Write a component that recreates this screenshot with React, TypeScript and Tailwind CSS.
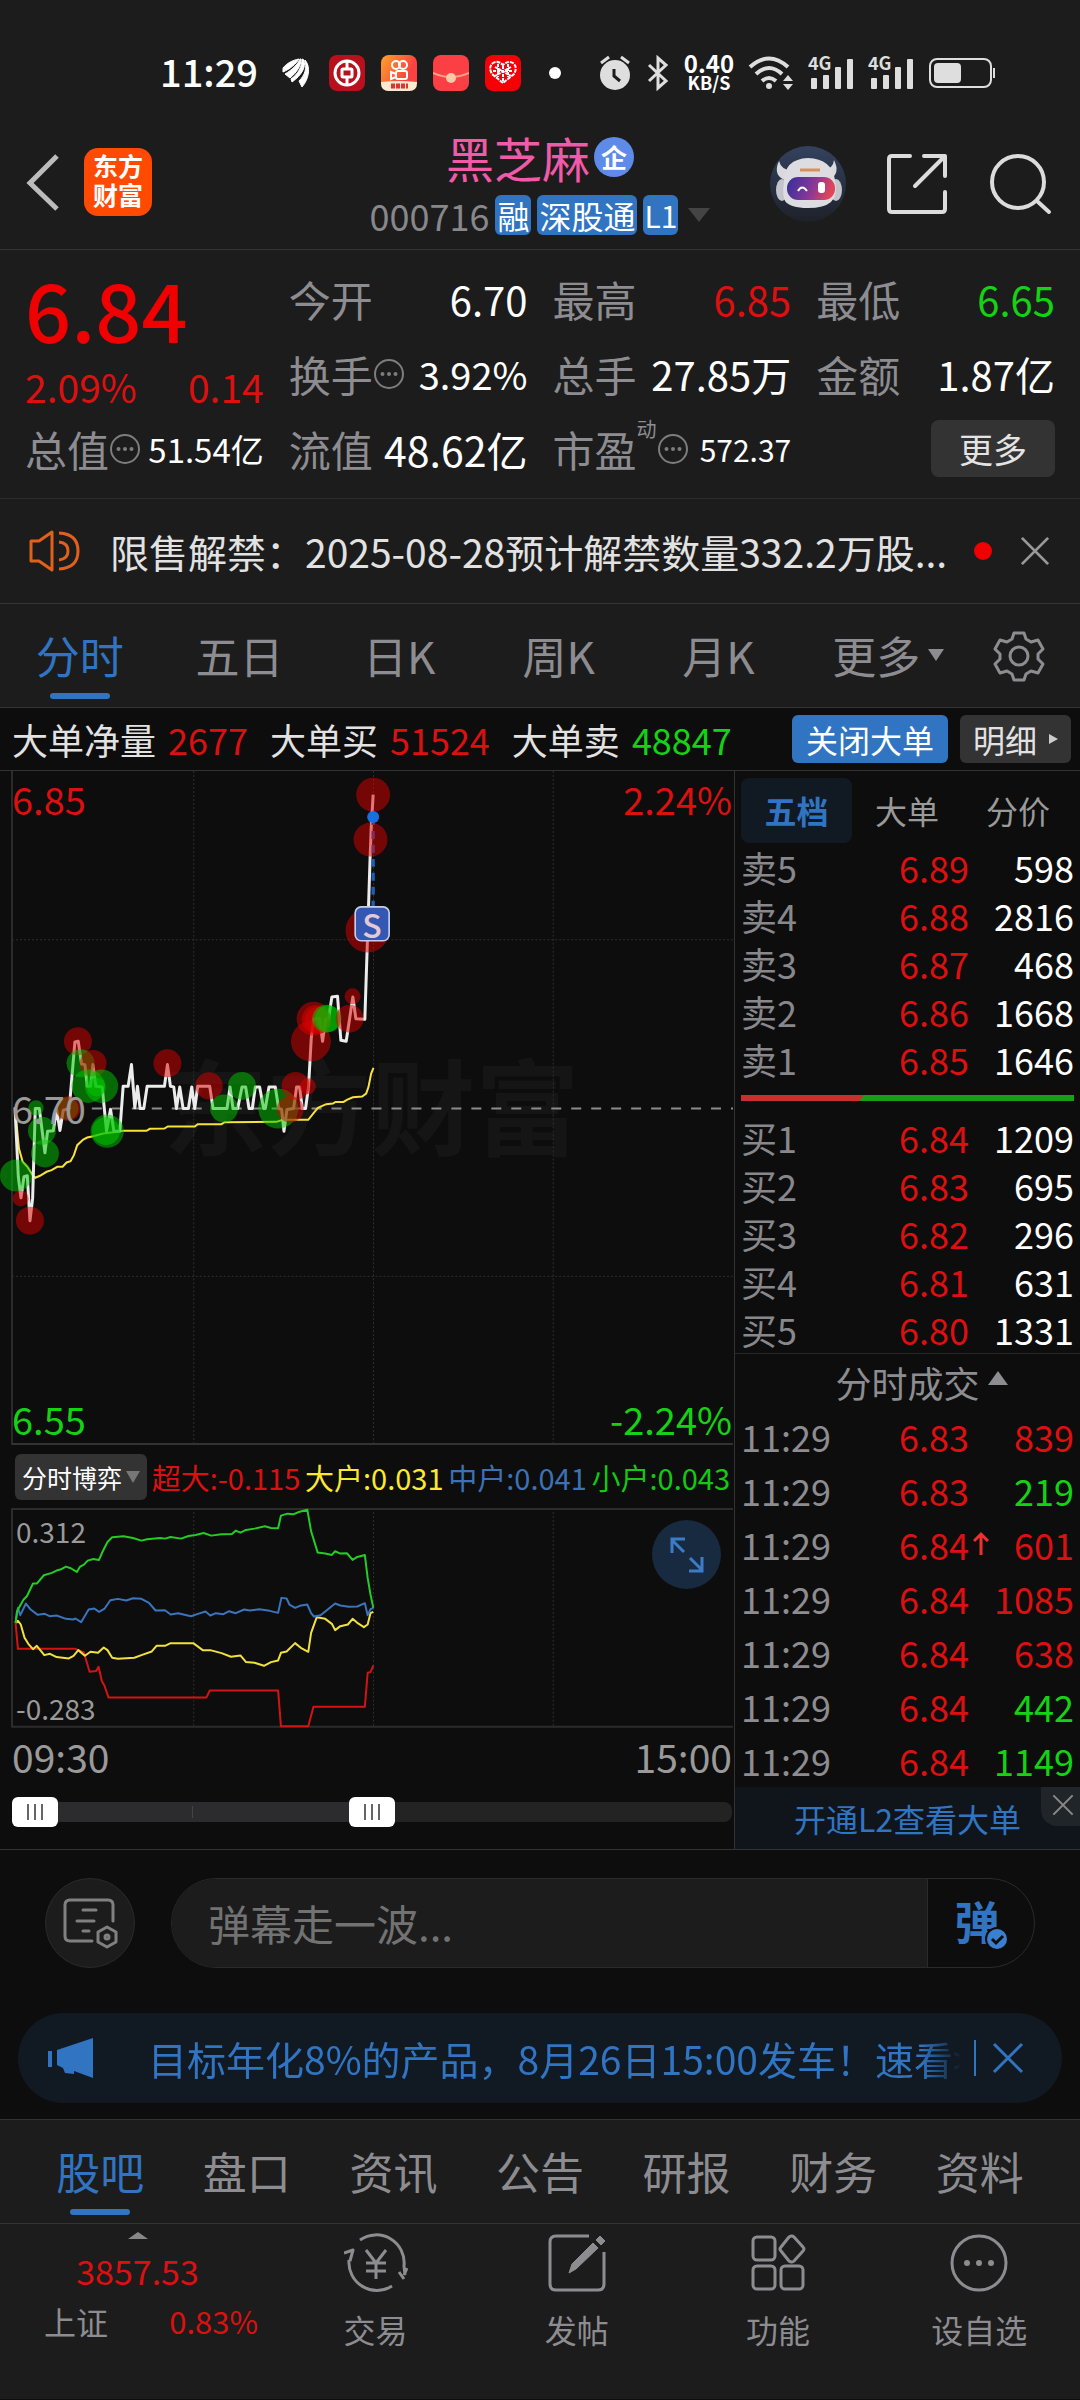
import { useState } from "react";
import type { ReactNode } from "react";

const stats = {
  open: "6.70",
  high: "6.85",
  low: "6.65",
};

const periodTabs = ["分时", "五日", "日K", "周K", "月K"];
const infoTabs = ["股吧", "盘口", "资讯", "公告", "研报", "财务", "资料"];

const asks = [
  ["卖5", "6.89", "598"],
  ["卖4", "6.88", "2816"],
  ["卖3", "6.87", "468"],
  ["卖2", "6.86", "1668"],
  ["卖1", "6.85", "1646"],
];

const bids = [
  ["买1", "6.84", "1209"],
  ["买2", "6.83", "695"],
  ["买3", "6.82", "296"],
  ["买4", "6.81", "631"],
  ["买5", "6.80", "1331"],
];

const trades = [
  { price: "6.83", volume: "839", up: true, arrow: false },
  { price: "6.83", volume: "219", up: false, arrow: false },
  { price: "6.84", volume: "601", up: true, arrow: true },
  { price: "6.84", volume: "1085", up: true, arrow: false },
  { price: "6.84", volume: "638", up: true, arrow: false },
  { price: "6.84", volume: "442", up: false, arrow: false },
  { price: "6.84", volume: "1149", up: false, arrow: false },
];

const priceLine =
  "45,447 55,655 63,718 72,655 82,652 90,787 98,720 106,450 118,450 135,583 143,518 160,517 170,452 180,516 190,455 208,450 225,250 235,248 245,316 255,318 262,383 272,383 279,318 288,383 307,385 320,518 332,452 342,518 360,518 370,383 385,383 395,318 405,448 413,383 421,450 432,450 442,383 494,383 503,318 512,383 522,385 530,450 540,385 550,450 566,450 576,385 585,450 594,383 630,383 640,450 682,450 691,385 700,450 714,450 727,385 738,385 748,450 758,450 767,385 780,385 792,450 797,450 808,385 827,385 837,450 846,453 853,518 862,453 882,450 891,385 900,385 908,450 918,450 927,383 935,240 942,180 960,180 969,248 978,182 987,180 997,115 1014,113 1024,245 1040,248 1050,182 1060,115 1069,180 1096,182 1102,0 1112,-309 1115,-390 1121,-493";

const averageLine =
  "45,447 57,570 68,610 82,625 98,650 106,658 120,652 140,640 155,635 172,625 188,625 200,612 212,608 222,590 232,560 250,543 262,537 280,533 310,525 340,521 370,517 440,517 450,511 494,510 504,504 585,504 594,497 665,497 675,491 830,490 850,484 926,484 945,460 955,448 980,437 1000,435 1008,430 1032,430 1042,424 1060,416 1088,414 1100,405 1107,385 1115,345 1122,328";

const RED = "#dc0000";
const GREEN = "#00c800";

const orders: [number, number, number, string][] = [
  [48, 651, 48, GREEN],
  [62, 720, 24, RED],
  [90, 787, 42, RED],
  [108, 448, 23, GREEN],
  [126, 517, 42, GREEN],
  [135, 585, 42, GREEN],
  [202, 450, 34, GREEN],
  [205, 450, 37, RED],
  [234, 248, 42, RED],
  [242, 314, 42, GREEN],
  [280, 314, 40, RED],
  [265, 383, 50, GREEN],
  [305, 383, 50, GREEN],
  [290, 385, 28, GREEN],
  [322, 518, 50, GREEN],
  [318, 518, 42, GREEN],
  [503, 314, 42, RED],
  [628, 382, 41, RED],
  [673, 450, 42, GREEN],
  [727, 382, 42, GREEN],
  [836, 450, 60, GREEN],
  [872, 452, 40, RED],
  [888, 382, 42, RED],
  [925, 383, 24, RED],
  [934, 248, 60, RED],
  [942, 180, 51, RED],
  [948, 182, 42, RED],
  [955, 185, 40, RED],
  [980, 180, 42, GREEN],
  [986, 180, 40, GREEN],
  [1050, 180, 42, RED],
  [1059, 113, 24, RED],
  [1121, -493, 51, RED],
  [1113, -358, 51, RED],
  [1104, -85, 66, RED],
];

const smallLine =
  "33,735 36,700 50,665 57,655 70,617 78,617 93,592 110,585 120,578 128,575 140,566 150,571 163,582 170,566 178,560 186,548 198,543 210,546 218,520 228,492 238,478 262,475 282,480 300,488 312,484 340,480 350,482 362,477 384,482 400,474 415,471 432,465 448,473 470,469 492,468 500,458 510,464 522,456 540,452 562,445 575,450 590,451 596,413 610,407 622,409 634,402 652,395 660,460 674,524 690,527 704,531 711,520 722,527 736,526 748,546 758,537 774,531 780,600 786,650 792,690";
const midLine =
  "33,735 38,690 43,712 55,677 65,695 80,711 95,708 105,715 120,713 140,723 155,725 160,722 172,733 188,695 200,692 210,702 222,692 234,667 250,663 268,668 282,661 300,663 316,675 330,698 350,697 362,710 378,706 405,715 420,708 436,701 446,713 458,706 474,709 486,700 500,706 518,695 530,698 550,694 572,699 590,705 597,660 608,662 614,680 626,690 636,684 652,680 660,706 666,716 680,712 711,677 722,683 740,687 758,686 774,676 780,712 786,694 792,690";
const bigLine =
  "33,735 38,729 44,740 52,780 60,798 70,814 78,804 94,832 106,828 120,838 146,842 156,834 166,817 180,834 192,822 208,825 220,809 228,817 238,840 250,843 285,840 300,832 322,821 332,804 350,804 362,796 410,796 430,817 446,817 470,826 490,837 510,833 522,853 540,855 560,864 575,853 590,848 596,825 608,821 626,796 640,812 654,822 660,765 672,718 690,723 704,738 711,757 722,745 738,740 748,723 758,735 772,748 780,740 786,706 792,702";
const superLine =
  "33,735 38,813 160,813 178,824 190,882 204,880 209,867 216,910 222,925 230,959 438,959 445,938 590,938 596,1046 654,1046 665,987 774,987 780,885 786,883 792,863";

function Info() {
  return (
    <svg viewBox="0 0 32 32" className="h-8 w-8 shrink-0 text-[#7d7d80]" fill="none" stroke="currentColor" strokeWidth="2">
      <circle cx="16" cy="16" r="14" />
      <g fill="currentColor" stroke="none">
        <circle cx="9.5" cy="16" r="2" />
        <circle cx="16" cy="16" r="2" />
        <circle cx="22.5" cy="16" r="2" />
      </g>
    </svg>
  );
}

function Cross({ className }: { className: string }) {
  return (
    <svg viewBox="0 0 32 32" className={className} fill="none" stroke="currentColor" strokeWidth="3">
      <path d="M2 2 30 30M30 2 2 30" />
    </svg>
  );
}

function Signal() {
  return (
    <span className="relative h-9 w-[46px]">
      <span className="absolute left-0 top-0 text-[18px] font-bold leading-[14px] text-[#ddd]">4G</span>
      <svg viewBox="0 0 46 36" className="h-9 w-[46px]" fill="#dedede">
        <rect x="3" y="23" width="6" height="11" rx="1" />
        <rect x="15" y="20" width="6" height="14" rx="1" />
        <rect x="27" y="12" width="6" height="22" rx="1" />
        <rect x="39" y="4" width="6" height="30" rx="1" />
      </svg>
    </span>
  );
}

function StatusBar() {
  return (
    <div className="flex h-[146px] items-center pl-40 pr-[84px]">
      <span className="w-[121px] pb-1 text-[38px] font-medium leading-10 text-white">11:29</span>
      <div className="flex items-center gap-4">
        <svg viewBox="0 0 32 36" className="h-9 w-8" fill="#fff">
          <path d="M2 13C6 8 12 5 18 4 15 9 9 14 2 17ZM4 19C11 15 17 9 19 4L20 4C20 11 16 17 9 23ZM10 24C17 19 21 12 21 4L23 5C25 12 21 20 11 27ZM18 26C24 20 26 13 24 5 30 12 28 24 21 32Z" stroke="#fff" strokeWidth="1" />
        </svg>
        <svg viewBox="0 0 36 36" className="h-9 w-9" fill="none" stroke="#fff">
          <rect width="36" height="36" rx="8" fill="#b8101c" stroke="none" />
          <circle cx="18" cy="18" r="12" strokeWidth="3" />
          <rect x="13" y="14" width="10" height="8" rx="1" strokeWidth="3" />
          <path d="M18 6V14M18 22V30" strokeWidth="3" />
        </svg>
        <svg viewBox="0 0 36 36" className="h-9 w-9" fill="none" stroke="#fff" strokeWidth="2">
          <defs>
            <linearGradient id="clip" x1="0" y1="0" x2="1" y2="0.6">
              <stop offset="0" stopColor="#fba52a" />
              <stop offset="0.8" stopColor="#fd4040" />
            </linearGradient>
          </defs>
          <rect width="36" height="36" rx="8" fill="url(#clip)" stroke="none" />
          <circle cx="15" cy="10" r="4" />
          <circle cx="22" cy="10" r="4" />
          <rect x="15" y="16" width="11" height="8" rx="2" />
          <path d="M15 19 10 17V24L15 22" />
          <path d="M0 27Q18 25 36 27V28Q36 36 28 36H8Q0 36 0 28Z" fill="#fbe9d0" stroke="none" />
          <path d="M10 31H27" stroke="#d33" strokeWidth="5" strokeDasharray="4 1" />
        </svg>
        <svg viewBox="0 0 36 36" className="h-9 w-9" fill="none">
          <rect width="36" height="36" rx="8" fill="#fb3f45" />
          <path d="M0 18Q18 26 36 18" stroke="#f9a08c" strokeWidth="2" />
          <circle cx="18" cy="23" r="5" fill="#f8c9a6" />
        </svg>
        <svg viewBox="0 0 36 36" className="h-9 w-9">
          <rect width="36" height="36" rx="8" fill="#f60008" />
          <path d="M18 28 7 19Q3 12 8 8 13 5 18 10 23 5 28 8 33 12 29 19Z" fill="none" stroke="#fff" strokeWidth="2" strokeDasharray="4 1" />
          <path d="M10 12 26 21M26 12 10 21M18 11V26M13 9V22M23 9V22M8 16H28" stroke="#fff" strokeWidth="2" strokeDasharray="3 1" />
        </svg>
      </div>
      <span className="ml-7 h-3 w-3 rounded-full bg-white" />
      <div className="ml-auto flex items-center gap-[14px]">
        <svg viewBox="0 0 34 36" className="h-9 w-[34px]" fill="#dedede">
          <circle cx="17" cy="20" r="15" />
          <path d="M3 8 11 2M31 8 23 2" stroke="#dedede" strokeWidth="3" />
          <path d="M16 14V21L22 26" fill="none" stroke="#1c1c1c" strokeWidth="3" />
        </svg>
        <svg viewBox="0 0 24 36" className="h-9 w-6" fill="none" stroke="#dedede" strokeWidth="3">
          <path d="M3 10 20 26 12 33V3L20 10 3 26" />
        </svg>
        <span className="flex w-[50px] flex-col items-center pb-1 font-bold text-white">
          <span className="text-[24px] leading-[22px]">0.40</span>
          <span className="text-[18px] leading-4">KB/S</span>
        </span>
        <svg viewBox="0 0 46 36" className="h-9 w-[46px]" fill="none" stroke="#dedede" strokeWidth="4">
          <path d="M2 12Q21-5 40 12M8 19Q21 7 34 19M14 26Q21 20 28 26" />
          <circle cx="21" cy="31" r="3" fill="#dedede" stroke="none" />
          <path d="M35 26 40 20 45 26ZM35 29H45L40 35Z" fill="#dedede" stroke="none" />
        </svg>
        <Signal />
        <Signal />
        <svg viewBox="0 0 68 36" className="h-9 w-[68px]" fill="none">
          <rect x="2" y="4" width="61" height="28" rx="7" stroke="#dedede" strokeWidth="2" />
          <rect x="6" y="8" width="27" height="20" rx="4" fill="#dedede" />
          <path d="M66 13V23" stroke="#dedede" strokeWidth="2" />
        </svg>
      </div>
    </div>
  );
}

function Robot() {
  return (
    <svg viewBox="0 0 76 76" className="h-[76px] w-[76px]">
      <defs>
        <linearGradient id="disc" x1="0" y1="0" x2="0" y2="1">
          <stop offset="0" stopColor="#34425f" />
          <stop offset="1" stopColor="#1d2129" />
        </linearGradient>
        <linearGradient id="visor" x1="0" y1="0" x2="1" y2="0.2">
          <stop offset="0" stopColor="#30309c" />
          <stop offset="0.6" stopColor="#8a3796" />
          <stop offset="1" stopColor="#e0455a" />
        </linearGradient>
      </defs>
      <circle cx="38" cy="38" r="38" fill="url(#disc)" />
      <path d="M9 15Q2 30 17 35L23 25Q11 24 9 15ZM64 14Q71 28 59 34L52 23Q63 24 64 14Z" fill="#d9d9de" />
      <ellipse cx="12" cy="44" rx="6" ry="11" fill="#c3c3cc" />
      <ellipse cx="66" cy="44" rx="6" ry="11" fill="#c3c3cc" />
      <path d="M14 36Q14 13 38 12 62 13 65 34 68 50 61 56 54 62 38 62 20 62 15 55 12 48 14 36Z" fill="#dddde1" />
      <rect x="17" y="31" width="48" height="23" rx="11" fill="url(#visor)" />
      <path d="M30 24H50" stroke="#d6905a" strokeWidth="3" />
      <path d="M28 45Q32 38 37 45" fill="none" stroke="#fff" strokeWidth="2" />
      <rect x="48" y="36" width="7" height="11" rx="3" fill="#fff" />
    </svg>
  );
}

function Header() {
  return (
    <header className="flex h-[104px] items-start border-b border-[#333] pl-6 pr-7">
      <div className="flex flex-1 items-center gap-5">
        <button aria-label="返回" className="flex h-[72px] w-10 items-center">
          <svg viewBox="0 0 40 60" className="h-[60px] w-10" fill="none" stroke="#bcbcbc" strokeWidth="5">
            <path d="M33 4 6 31 33 57" />
          </svg>
        </button>
        <span className="flex h-[68px] w-[68px] flex-col items-center justify-center rounded-[14px] bg-[#ff4a04] pb-1 text-[25px] font-bold leading-[29px] text-white">
          <span>东方</span>
          <span>财富</span>
        </span>
      </div>
      <div className="ml-1 flex flex-col items-center">
        <h1 className="-mt-4 flex items-center gap-1 text-[48px] leading-[54px] text-[#f05aa8]">
          黑芝麻
          <span className="flex h-10 w-10 items-center justify-center rounded-full bg-[#5f8be8] text-[26px] font-bold leading-8 text-white">企</span>
        </h1>
        <button className="mt-[11px] flex items-center gap-[6px] text-[36px] leading-10 text-[#88888c]">
          000716
          <span className="rounded-[6px] bg-[#3074c2] px-[2px] text-[32px] text-white">融</span>
          <span className="rounded-[6px] bg-[#3074c2] px-[2px] text-[32px] text-white">深股通</span>
          <span className="rounded-[6px] bg-[#3074c2] px-[1px] text-[30px] text-white">L1</span>
          <svg viewBox="0 0 22 16" className="ml-1 h-4 w-[22px]" fill="#444">
            <path d="M0 1H22L11 15Z" />
          </svg>
        </button>
      </div>
      <div className="flex flex-1 items-center justify-end gap-10">
        <button aria-label="智能助手">
          <Robot />
        </button>
        <button aria-label="分享">
          <svg viewBox="0 0 62 62" className="h-[62px] w-[62px]" fill="none" stroke="#dcdcdc" strokeWidth="4" strokeLinecap="round">
            <path d="M24 3H6Q3 3 3 6V56Q3 59 6 59H56Q59 59 59 56V39M38 3H59V23M59 3 29 33" strokeLinejoin="round" />
          </svg>
        </button>
        <button aria-label="搜索">
          <svg viewBox="0 0 64 64" className="h-16 w-16" fill="none" stroke="#dcdcdc" strokeWidth="4" strokeLinecap="round">
            <circle cx="30" cy="30" r="26" />
            <path d="M49 49 61 60" />
          </svg>
        </button>
      </div>
    </header>
  );
}

function Stat({ label, value, tone }: { label: ReactNode; value: string; tone: string }) {
  return (
    <div className="flex items-center justify-between whitespace-nowrap">
      <span className="flex items-center text-[42px] text-[#8d8d91]">{label}</span>
      <span className={tone}>{value}</span>
    </div>
  );
}

function Quote() {
  const white = "text-[40px] text-white";
  return (
    <section className="grid auto-rows-[75px] grid-cols-4 gap-x-[25px] border-b border-[#2c2c2c] px-[25px] pb-3 pt-[11px] leading-[50px]">
      <div className="row-span-2 flex flex-col justify-between text-[39px] text-[#dc1010]">
        <strong className="text-[81px] font-medium leading-[94px] text-[#f00000]">6.84</strong>
        <div className="flex justify-between">
          <span>2.09%</span>
          <span>0.14</span>
        </div>
      </div>
      <Stat label="今开" value={stats.open} tone={white} />
      <Stat label="最高" value={stats.high} tone="text-[40px] text-[#dc1010]" />
      <Stat label="最低" value={stats.low} tone="text-[40px] text-[#14d214]" />
      <Stat label={<>换手<Info /></>} value="3.92%" tone="text-[38px] text-white" />
      <Stat label="总手" value="27.85万" tone={white} />
      <Stat label="金额" value="1.87亿" tone={white} />
      <Stat label={<>总值<Info /></>} value="51.54亿" tone="text-[33px] text-white" />
      <Stat label="流值" value="48.62亿" tone="text-[41px] text-white" />
      <Stat
        label={
          <>
            市盈<sup className="-top-5 text-[20px] leading-5">动</sup>
            <Info />
          </>
        }
        value="572.37"
        tone="text-[30px] text-white"
      />
      <button className="h-[57px] w-[124px] self-center justify-self-end rounded-lg bg-[#333] text-[34px] text-[#e4e4e4]">更多</button>
    </section>
  );
}

function Notice() {
  return (
    <section className="flex h-[105px] items-center border-b border-[#333] px-7">
      <svg viewBox="0 0 54 44" className="h-11 w-[54px] shrink-0" fill="none" stroke="#e0601c" strokeWidth="3" strokeLinejoin="round">
        <path d="M3 12H11L24 3V41L11 32H3ZM31 4Q50 5 50 22T31 40M31 13Q40 14 40 22T31 31" />
      </svg>
      <a href="#notice" className="ml-7 flex-1 truncate text-[39px] leading-[58px] text-[#e2e2e2]">
        限售解禁：2025-08-28预计解禁数量332.2万股...
      </a>
      <span className="h-[18px] w-[18px] shrink-0 rounded-full bg-[#f00000]" />
      <button aria-label="关闭公告" className="ml-7 mr-[2px]">
        <Cross className="h-[30px] w-[30px] text-[#999]" />
      </button>
    </section>
  );
}

function PeriodTabs({ active, onPick }: { active: string; onPick: (t: string) => void }) {
  return (
    <nav className="flex h-[104px] items-center border-b border-[#333] text-[44px] leading-[56px] text-[#8d8d91]">
      <div className="grid h-full flex-1 grid-cols-6">
        {periodTabs.map((t) => (
          <button key={t} onClick={() => onPick(t)} className={t === active ? "relative pb-[2px] text-[#3074c2]" : "pb-[2px]"}>
            {t}
            {t === active && <span className="absolute bottom-2 left-1/2 h-[6px] w-[60px] -translate-x-1/2 rounded-full bg-[#3074c2]" />}
          </button>
        ))}
        <button className="flex items-center justify-center gap-2 pb-[2px] pl-5">
          更多
          <svg viewBox="0 0 16 12" className="h-3 w-4" fill="currentColor">
            <path d="M0 0H16L8 12Z" />
          </svg>
        </button>
      </div>
      <button aria-label="设置" className="flex w-[122px] justify-center">
        <svg viewBox="0 0 54 54" className="h-[54px] w-[54px]" fill="none" stroke="currentColor" strokeWidth="3" strokeLinejoin="round">
          <path d="M22 4H32L34 10 39 13 46 11 51 20 46 25V30L51 35 46 44 39 42 34 45 32 51H22L20 45 15 42 8 44 3 35 8 30V25L3 20 8 11 15 13 20 10Z" />
          <circle cx="27" cy="27" r="9" />
        </svg>
      </button>
    </nav>
  );
}

function BigOrders() {
  return (
    <div className="flex h-[63px] items-center border-b border-[#333] pl-3 pr-[9px] text-[36px] leading-10 text-[#e2e2e2]">
      <span>大单净量</span>
      <span className="ml-3 text-[#dc1010]">2677</span>
      <span className="ml-[22px]">大单买</span>
      <span className="ml-3 text-[#dc1010]">51524</span>
      <span className="ml-[22px]">大单卖</span>
      <span className="ml-3 text-[#14d214]">48847</span>
      <button className="ml-auto h-12 w-[156px] rounded-md bg-[#3074c2] text-[32px] text-white">关闭大单</button>
      <button className="ml-3 flex h-12 w-[111px] items-center justify-center gap-3 rounded-md bg-[#333] text-[32px]">
        明细
        <svg viewBox="0 0 9 10" className="h-[10px] w-[9px]" fill="#ccc">
          <path d="M0 0 9 5 0 10Z" />
        </svg>
      </button>
    </div>
  );
}

function PriceChart() {
  return (
    <div className="relative text-[38px] leading-[44px]">
      <span className="absolute left-1/2 top-1/2 -translate-x-[49%] -translate-y-[54%] whitespace-nowrap text-[104px] font-bold leading-[120px] text-[#151515]">
        东方财富
      </span>
      <svg viewBox="0 0 735 675" className="relative block w-full" fill="none">
        <path d="M194 0V675M374 0V675M554 0V675M12 169H734M12 506H734" stroke="#303030" strokeDasharray="2 2" />
        <path d="M12 0V675" stroke="#2c2c2c" strokeWidth="2" />
        <path d="M12 674H734" stroke="#333" strokeWidth="2" />
        <path d="M92 338H734" stroke="#8c8c8c" strokeWidth="2" strokeDasharray="10 10" />
        <g transform="translate(0 188) scale(0.33333)">
          <polyline points={averageLine} stroke="#f7e23c" strokeWidth="6" />
          <polyline points={priceLine} stroke="#ececec" strokeWidth="9" strokeLinejoin="round" />
          <path d="M1121-426V-158" stroke="#1c5fb4" strokeWidth="10" strokeDasharray="24 18" />
          {orders.map(([x, y, r, color]) => (
            <circle key={`${x}-${y}`} cx={x} cy={y} r={r} fill={color} fillOpacity="0.5" />
          ))}
          <circle cx="1121" cy="-426" r="18" fill="#1a6fe0" />
          <rect x="1067" y="-156" width="102" height="102" rx="18" fill="#3457b4" stroke="#c8cdec" strokeWidth="5" />
        </g>
      </svg>
      <span className="absolute left-[332px] top-[135px] w-20 text-center text-[32px] font-medium leading-9 text-[#e4c8d4]">S</span>
      <span className="absolute left-3 top-[6px] text-[#dc1010]">6.85</span>
      <span className="absolute right-[2px] top-[6px] text-[#dc1010]">2.24%</span>
      <span className="absolute left-3 top-1/2 -translate-y-1/2 text-[#9a9a9a]">6.70</span>
      <span className="absolute bottom-1 left-3 text-[#14d214]">6.55</span>
      <span className="absolute bottom-1 right-[2px] text-[#14d214]">-2.24%</span>
    </div>
  );
}

function FlowChart() {
  return (
    <>
      <div className="flex h-[63px] items-center justify-between pl-[15px] pr-1 text-[29px] leading-9">
        <button className="flex h-[46px] w-[132px] items-center justify-center gap-1 rounded-md bg-[#333] text-[25px] text-white">
          分时博弈
          <svg viewBox="0 0 14 12" className="h-3 w-[14px]" fill="#777">
            <path d="M0 0H14L7 12Z" />
          </svg>
        </button>
        <span className="text-[#dc1010]">超大:-0.115</span>
        <span className="text-[#fbe930]">大户:0.031</span>
        <span className="text-[#3c72b4]">中户:0.041</span>
        <span className="text-[#14c814]">小户:0.043</span>
      </div>
      <div className="relative text-[28px] leading-8 text-[#9a9a9a]">
        <svg viewBox="0 0 735 220" className="block w-full" fill="none">
          <path d="M194 0V219M374 0V219M554 0V219" stroke="#303030" strokeDasharray="2 2" />
          <path d="M734 1H12V219H734" stroke="#2c2c2c" strokeWidth="2" />
          <g transform="translate(0 -130) scale(0.472 0.33333)" strokeLinejoin="round" strokeWidth="2">
            <polyline vectorEffect="non-scaling-stroke" points={superLine} stroke="#d41414" />
            <polyline vectorEffect="non-scaling-stroke" points={bigLine} stroke="#f0e040" />
            <polyline vectorEffect="non-scaling-stroke" points={midLine} stroke="#3a74bd" />
            <polyline vectorEffect="non-scaling-stroke" points={smallLine} stroke="#24cc24" />
          </g>
        </svg>
        <span className="absolute left-4 top-[7px]">0.312</span>
        <span className="absolute bottom-1 left-4">-0.283</span>
        <button aria-label="全屏" className="absolute right-[13px] top-3 flex h-[69px] w-[69px] items-center justify-center rounded-full bg-[#182a40]">
          <svg viewBox="0 0 36 36" className="h-9 w-9" fill="none" stroke="#3a7cc8" strokeWidth="3">
            <path d="M16 2H3V16M3 3 15 15M20 34H33V20M33 33 21 21" />
          </svg>
        </button>
      </div>
    </>
  );
}

const thumb =
  "pointer-events-none absolute inset-0 m-0 h-[30px] w-full appearance-none bg-transparent [&::-webkit-slider-thumb]:pointer-events-auto [&::-webkit-slider-thumb]:h-[30px] [&::-webkit-slider-thumb]:w-[46px] [&::-webkit-slider-thumb]:appearance-none [&::-webkit-slider-thumb]:rounded-md [&::-webkit-slider-thumb]:[background:linear-gradient(90deg,#666_2px,transparent_2px_7px,#666_7px_9px,transparent_9px_14px,#666_14px)_center/16px_16px_no-repeat_#fff]";

function TimeRange() {
  const [from, setFrom] = useState(0);
  const [to, setTo] = useState(50);
  return (
    <>
      <div className="flex justify-between pl-3 pr-[2px] pt-1 text-[39px] leading-[48px] text-[#9a9a9a]">
        <span>09:30</span>
        <span>15:00</span>
      </div>
      <div className="relative mb-[22px] ml-3 mr-[2px] mt-[17px] h-[30px]">
        <div className="absolute inset-x-0 top-[5px] h-5 overflow-hidden rounded-lg bg-[#232323]">
          <div className="h-full bg-[#2c2c2e]" style={{ width: `${to}%` }} />
        </div>
        <span className="absolute left-1/4 top-[9px] h-3 w-px bg-[#444]" />
        <input type="range" aria-label="开始时间" className={thumb} value={from} onChange={(e) => setFrom(Number(e.target.value))} />
        <input type="range" aria-label="结束时间" className={thumb} value={to} onChange={(e) => setTo(Number(e.target.value))} />
      </div>
    </>
  );
}

function Depth({ rows }: { rows: string[][] }) {
  return (
    <table className="w-full text-[36px] leading-10">
      <tbody>
        {rows.map(([label, price, volume]) => (
          <tr key={label} className="h-12">
            <th scope="row" className="w-20 p-0 text-left font-normal text-[#88888c]">{label}</th>
            <td className="p-0 text-right text-[#dc1010]">{price}</td>
            <td className="w-[105px] p-0 text-right text-white">{volume}</td>
          </tr>
        ))}
      </tbody>
    </table>
  );
}

function OrderBook() {
  return (
    <aside className="flex w-[346px] shrink-0 flex-col border-l border-[#333]">
      <div className="flex h-[72px] items-end justify-between pl-[6px] pr-[30px] text-[32px] leading-[65px] text-[#9a9a9a]">
        <button className="h-[65px] w-[111px] rounded-lg bg-[#111a23] font-bold text-[#3074c2]">五档</button>
        <button>大单</button>
        <button className="ml-6">分价</button>
      </div>
      <div className="pl-[6px] pr-[6px]">
        <Depth rows={asks} />
        <div className="mb-3 mt-3 flex h-[6px] bg-[#16a016]">
          <span className="w-[37%] bg-[#c63030] [clip-path:polygon(0_0,100%_0,96%_100%,0_100%)]" />
        </div>
        <Depth rows={bids} />
      </div>
      <button className="flex h-[56px] items-center justify-center gap-2 border-t border-[#282828] pl-7 text-[36px] leading-10 text-[#8d8d91]">
        分时成交
        <svg viewBox="0 0 20 14" className="mb-2 h-[14px] w-5" fill="currentColor">
          <path d="M10 0 20 14H0Z" />
        </svg>
      </button>
      <div className="pl-[6px] pr-[6px]">
        <table className="w-full text-[36px] leading-10">
          <tbody>
            {trades.map((t, i) => (
              <tr key={i} className="h-[54px]">
                <td className="w-20 p-0 text-[#8d8d91]">11:29</td>
                <td className="relative p-0 text-right text-[#dc1010]">
                  {t.price}
                  {t.arrow && (
                    <svg viewBox="0 0 16 24" className="absolute -right-5 top-[14px] h-6 w-4" fill="none" stroke="#f03030" strokeWidth="3">
                      <path d="M8 24V3M1 10 8 3 15 10" />
                    </svg>
                  )}
                </td>
                <td className={t.up ? "w-[105px] p-0 text-right text-[#dc1010]" : "w-[105px] p-0 text-right text-[#14d214]"}>{t.volume}</td>
              </tr>
            ))}
          </tbody>
        </table>
      </div>
      <div className="relative flex flex-1 items-center justify-center bg-[#10151b]">
        <a href="#l2" className="text-[32px] leading-10 text-[#3074c2]">开通L2查看大单</a>
        <button aria-label="关闭推广" className="absolute right-0 top-0 flex h-[39px] w-[39px] items-center justify-center rounded-bl-2xl bg-[#20252a] pb-1 pl-1">
          <Cross className="h-[22px] w-[22px] text-[#888]" />
        </button>
      </div>
    </aside>
  );
}

function Danmu() {
  return (
    <div className="flex items-center gap-9 px-[45px] pb-[45px] pt-7">
      <button aria-label="弹幕设置" className="flex h-[90px] w-[90px] shrink-0 items-center justify-center rounded-full border border-[#2a2a2a] bg-[#1c1c1c]">
        <svg viewBox="0 0 56 52" className="h-[52px] w-14" fill="none" stroke="#808080" strokeWidth="3" strokeLinecap="round">
          <path d="M30 44H8Q3 44 3 39V8Q3 3 8 3H46Q51 3 51 8V24M21 13H34M15 24H32M21 34H27" />
          <path d="M45 30 54 35V45L45 50 36 45V35Z" strokeLinejoin="round" />
          <circle cx="45" cy="40" r="2" />
        </svg>
      </button>
      <form className="flex h-[90px] flex-1 overflow-hidden rounded-full border border-[#2a2a2a]" onSubmit={(e) => e.preventDefault()}>
        <input
          aria-label="弹幕"
          placeholder="弹幕走一波..."
          className="min-w-0 flex-1 border-r border-[#2a2a2a] bg-[#1c1c1c] pl-9 text-[42px] leading-[56px] text-white outline-none placeholder:text-[#727272]"
        />
        <button aria-label="弹幕开关" className="relative flex w-[106px] items-center justify-center text-[45px] font-bold leading-[50px] text-[#3074c2]">
          <span className="mb-1 mr-2">弹</span>
          <svg viewBox="0 0 24 24" className="absolute bottom-4 right-[25px] h-6 w-6">
            <circle cx="12" cy="12" r="12" fill="#0d0d0d" />
            <circle cx="12" cy="12" r="10" fill="#3a80d0" />
            <path d="M7 12 11 16 18 9" fill="none" stroke="#0d0d0d" strokeWidth="3" />
          </svg>
        </button>
      </form>
    </div>
  );
}

function Promo() {
  return (
    <div className="mx-[18px] mb-4 flex h-[90px] items-center rounded-full bg-[#111a23] pl-[30px] pr-[38px] text-[#3074c2]">
      <svg viewBox="0 0 46 42" className="h-[42px] w-[46px] shrink-0" fill="currentColor">
        <path d="M0 14H4V30H0ZM9 13 45 1V41L26 34V37L17 36 15 31 9 28Z" />
      </svg>
      <a
        href="#promo"
        className="ml-[54px] w-0 flex-1 overflow-hidden whitespace-nowrap text-[39px] leading-[58px] [mask-image:linear-gradient(90deg,#000_95%,transparent)]"
      >
        目标年化8%的产品，8月26日15:00发车！速看&gt;&gt;
      </a>
      <span className="ml-3 h-9 w-[2px] bg-[#3074c2]" />
      <button aria-label="关闭推荐" className="ml-4">
        <Cross className="h-8 w-8" />
      </button>
    </div>
  );
}

function InfoTabs() {
  const [active, setActive] = useState("股吧");
  return (
    <nav className="grid h-[105px] grid-cols-7 border-y border-[#333] bg-[#1c1c1c] px-[27px] text-[44px] leading-[56px] text-[#8d8d91]">
      {infoTabs.map((t) => (
        <button key={t} onClick={() => setActive(t)} className={t === active ? "relative text-[#3074c2]" : ""}>
          {t}
          {t === active && <span className="absolute bottom-2 left-1/2 h-[6px] w-[60px] -translate-x-1/2 rounded-full bg-[#3074c2]" />}
        </button>
      ))}
    </nav>
  );
}

function NavItem({ label, children }: { label: string; children: ReactNode }) {
  return (
    <button className="flex flex-1 flex-col items-center gap-4 pt-[9px] text-[32px] leading-10 text-[#8d8d91]">
      <svg viewBox="0 0 64 60" className="h-[60px] w-16" fill="none" stroke="currentColor" strokeWidth="3" strokeLinejoin="round">
        {children}
      </svg>
      <span>{label}</span>
    </button>
  );
}

function BottomNav() {
  return (
    <footer className="flex h-[175px] bg-[#1c1c1c]">
      <button className="flex w-[275px] flex-col items-center pt-2 text-[#dc1010]">
        <svg viewBox="0 0 20 7" className="h-[7px] w-5" fill="#888">
          <path d="M10 0 20 7H0Z" />
        </svg>
        <span className="mt-3 text-[34px] leading-10">3857.53</span>
        <span className="flex w-full items-center justify-between pl-11 pr-[17px] pt-[10px] leading-10">
          <span className="text-[32px] text-[#8d8d91]">上证</span>
          <span className="text-[31px]">0.83%</span>
        </span>
      </button>
      <NavItem label="交易">
        <path d="M16 7A28 28 0 0 1 60 33L61 42M60 46 55 39M60 42 63 35M48 53A28 28 0 0 1 5 27M0 20 9 17 6 28" />
        <path d="M22 17 32 30 42 17M22 30H42M22 38H42M32 30V46" />
      </NavItem>
      <NavItem label="发帖">
        <path d="M44 3H11Q5 3 5 9V51Q5 57 11 57H53Q59 57 59 51V19" />
        <path d="M24 40 27 31 48 10 53 15 31 36Z" fill="currentColor" strokeWidth="1" />
        <path d="M51 7 55 3 60 8 56 12Z" fill="currentColor" strokeWidth="1" />
      </NavItem>
      <NavItem label="功能">
        <rect x="7" y="4" width="22" height="23" rx="4" />
        <rect x="7" y="33" width="22" height="23" rx="4" />
        <rect x="35" y="33" width="22" height="23" rx="4" />
        <path d="M43 4Q46 2 48 4L57 14Q59 16 57 18L48 28Q46 30 43 28L35 18Q33 16 35 14Z" />
      </NavItem>
      <NavItem label="设自选">
        <circle cx="32" cy="30" r="27" />
        <g fill="currentColor" stroke="none">
          <circle cx="20" cy="30" r="3" />
          <circle cx="32" cy="30" r="3" />
          <circle cx="44" cy="30" r="3" />
        </g>
      </NavItem>
    </footer>
  );
}

export default function App() {
  const [period, setPeriod] = useState("分时");
  return (
    <div className="min-h-screen w-full bg-[#0d0d0d] font-['Noto_Sans_CJK_SC',sans-serif]">
      <div className="bg-[#1c1c1c]">
        <StatusBar />
        <Header />
        <Quote />
        <Notice />
        <PeriodTabs active={period} onPick={setPeriod} />
      </div>
      <BigOrders />
      <main className="flex border-b border-[#333]">
        <div className="min-w-0 flex-1">
          <PriceChart />
          <FlowChart />
          <TimeRange />
        </div>
        <OrderBook />
      </main>
      <Danmu />
      <Promo />
      <InfoTabs />
      <BottomNav />
    </div>
  );
}
